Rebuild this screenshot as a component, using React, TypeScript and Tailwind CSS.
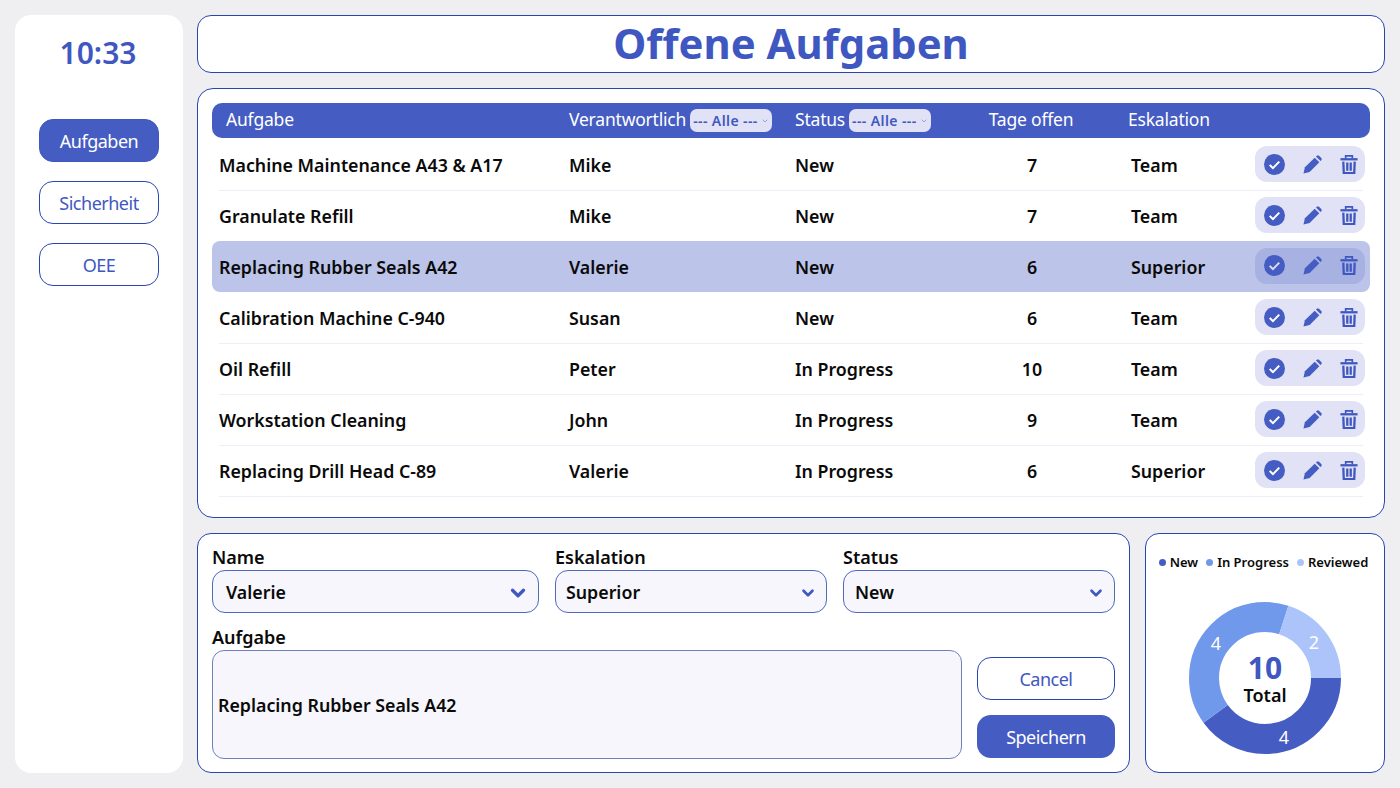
import { ChevronDown } from "lucide-react";

interface Task {
  title: string;
  owner: string;
  status: string;
  days: number;
  escalation: string;
  selected?: boolean;
  noDivider?: boolean;
}

const tasks: Task[] = [
  { title: "Machine Maintenance A43 & A17", owner: "Mike", status: "New", days: 7, escalation: "Team" },
  { title: "Granulate Refill", owner: "Mike", status: "New", days: 7, escalation: "Team", noDivider: true },
  { title: "Replacing Rubber Seals A42", owner: "Valerie", status: "New", days: 6, escalation: "Superior", selected: true, noDivider: true },
  { title: "Calibration Machine C-940", owner: "Susan", status: "New", days: 6, escalation: "Team" },
  { title: "Oil Refill", owner: "Peter", status: "In Progress", days: 10, escalation: "Team" },
  { title: "Workstation Cleaning", owner: "John", status: "In Progress", days: 9, escalation: "Team" },
  { title: "Replacing Drill Head C-89", owner: "Valerie", status: "In Progress", days: 6, escalation: "Superior" },
];

const columns = "grid-cols-[350px_226px_138px_198px_1fr]";
const buttonLabel = "pt-[2px] text-[18px] tracking-[-0.5px]";

function HeaderFilter() {
  return (
    <span className="flex h-[23px] w-[82px] items-center justify-between rounded-[7px] bg-[#e1e2f5] pl-[3px] pr-[3px] text-[14px] font-semibold tracking-[0.4px] text-[#3f57c0]">
      --- Alle ---
      <ChevronDown className="h-[8px] w-[8px] text-[#6f7fd0]" strokeWidth={2} />
    </span>
  );
}

function ActionIcons({ selected }: { selected?: boolean }) {
  return (
    <div
      className={`flex h-[36px] w-[110px] items-center rounded-[12px] pl-[9px] ${
        selected ? "-mt-[4px] bg-[#a7b2e2]" : "-mt-[2px] bg-[#e1e2f5]"
      }`}
    >
      <svg viewBox="0 0 22 22" className="h-[21px] w-[21px]">
        <circle cx="11" cy="11" r="11" fill="#455cc2" />
        <path d="M6 11.4l3.4 3.4L16 8" fill="none" stroke={selected ? "#d5daf2" : "#ffffff"} strokeWidth="2.2" />
      </svg>
      <svg viewBox="0 0 20 20" className="ml-[18px] h-[19px] w-[19px]" fill="#455cc2">
        <path d="M0.5 19.5L2 12.8L12.3 2.8L17.2 7.7L7 18Z" />
        <path d="M13.6 1.6L14.6 0.7Q15.7 -0.2 16.8 0.7L19.3 3.2Q20.2 4.3 19.3 5.4L18.4 6.4Z" />
      </svg>
      <svg viewBox="0 0 18 20" className="ml-[18px] h-[19px] w-[18px]" fill="none" stroke="#3f57c0" strokeWidth="2.4">
        <path d="M5.5 3.5V1h7v2.5" strokeWidth="1.8" />
        <path d="M0 4.5h18" />
        <path d="M3 7l.5 12h11L15 7" />
        <path d="M7.2 8v8.5M10.8 8v8.5" />
      </svg>
    </div>
  );
}

function TaskRow({ task }: { task: Task }) {
  const rowLayout = task.selected ? "h-[51px] pt-[2px] mb-px rounded-[8px] bg-[#bcc4e9]" : "h-[50px]";
  return (
    <div className={`grid ${rowLayout} ${columns} items-center pl-[7px] text-[17.8px] font-semibold text-[#0a0a0a]`}>
      <span>{task.title}</span>
      <span>{task.owner}</span>
      <span>{task.status}</span>
      <span className="text-center">{task.days}</span>
      <div className="flex items-center justify-between pr-[5px]">
        <span>{task.escalation}</span>
        <ActionIcons selected={task.selected} />
      </div>
    </div>
  );
}

function FormSelect({ label, value, width, pad, chevron }: { label: string; value: string; width: string; pad: string; chevron: string }) {
  return (
    <div className={width}>
      <div className="text-[18px] font-semibold leading-[25px] text-[#0a0a0a]">{label}</div>
      <div className={`flex h-[43px] items-center justify-between rounded-[13px] border border-[#5268bb] bg-[#f6f6fc] pt-[2px] pr-[9px] text-[17.8px] font-semibold text-[#0a0a0a] ${pad}`}>
        {value}
        <ChevronDown className={`${chevron} text-[#3f57c0]`} strokeWidth={3.5} />
      </div>
    </div>
  );
}

function Donut() {
  return (
    <div className="relative mx-auto h-[152px] w-[152px]">
      <svg viewBox="0 0 152 152" className="h-[152px] w-[152px]">
        <circle cx="76" cy="76" r="61" fill="none" stroke="#455cc2" strokeWidth="30" pathLength={10} strokeDasharray="4 6" />
        <circle cx="76" cy="76" r="61" fill="none" stroke="#7098eb" strokeWidth="30" pathLength={10} strokeDasharray="4 6" strokeDashoffset={-4} />
        <circle cx="76" cy="76" r="61" fill="none" stroke="#adc4fb" strokeWidth="30" pathLength={10} strokeDasharray="2 8" strokeDashoffset={-8} />
        <text x="95" y="142" fill="#ffffff" fontSize="18" textAnchor="middle">4</text>
        <text x="27" y="48" fill="#ffffff" fontSize="18" textAnchor="middle">4</text>
        <text x="125" y="47" fill="#ffffff" fontSize="18" textAnchor="middle">2</text>
      </svg>
      <div className="absolute inset-0 flex flex-col items-center justify-center pt-[2px]">
        <span className="text-[30px] font-bold leading-[32px] text-[#3f57c0]">10</span>
        <span className="text-[18px] font-semibold leading-[22px] text-[#0a0a0a]">Total</span>
      </div>
    </div>
  );
}

export default function App() {
  return (
    <div className="flex h-[788px] w-[1400px] gap-[14px] overflow-hidden bg-[#efeef1] p-[15px] font-['Noto_Sans',sans-serif]">
      <aside className="flex h-[758px] w-[168px] flex-col items-center rounded-[16px] bg-white pt-[17px]">
        <div className="pr-[2px] text-[30px] font-semibold leading-[42px] text-[#3f57c0]">10:33</div>
        <nav className="mt-[45px] flex flex-col gap-[19px]">
          <button className={`h-[43px] w-[120px] rounded-[14px] border border-[#3f57c0] bg-[#455cc2] text-white ${buttonLabel}`}>Aufgaben</button>
          <button className={`h-[43px] w-[120px] rounded-[14px] border border-[#2b44b4] bg-white text-[#3f57c0] ${buttonLabel}`}>Sicherheit</button>
          <button className={`h-[43px] w-[120px] rounded-[14px] border border-[#2b44b4] bg-white text-[#3f57c0] ${buttonLabel}`}>OEE</button>
        </nav>
      </aside>

      <main className="flex w-[1188px] flex-col gap-[15px]">
        <header className="flex h-[58px] items-center justify-center rounded-[14px] border border-[#2b44b4] bg-white pb-[1px] text-[41.8px] font-bold text-[#3f57c0]">
          Offene Aufgaben
        </header>

        <section className="h-[430px] rounded-[16px] border border-[#2b44b4] bg-white px-[14px] pt-[14px]">
          <div className={`grid h-[35px] ${columns} items-center rounded-[10px] bg-[#455cc2] pl-[14px] text-[17.5px] tracking-[-0.2px] text-white`}>
            <span className="-mt-[2px]">Aufgabe</span>
            <span className="-ml-[7px] flex items-center gap-[4px]"><span className="-mt-[2px]">Verantwortlich</span> <HeaderFilter /></span>
            <span className="-ml-[7px] flex items-center gap-[4px]"><span className="-mt-[2px]">Status</span> <HeaderFilter /></span>
            <span className="-mt-[2px] -ml-[16px] text-center">Tage offen</span>
            <span className="-mt-[2px] -ml-[10px]">Eskalation</span>
          </div>
          <div className="mt-[2px]">
            {tasks.map((task) => (
              <div key={task.title}>
                <TaskRow task={task} />
                {!task.noDivider && <div className="mx-[7px] h-px bg-[#eeeef8]" />}
              </div>
            ))}
          </div>
        </section>

        <div className="flex gap-[15px]">
          <section className="h-[240px] w-[933px] rounded-[14px] border border-[#2b44b4] bg-white px-[14px] pt-[11px]">
            <div className="flex gap-[16px]">
              <FormSelect label="Name" value="Valerie" width="w-[327px]" pad="pl-[13px]" chevron="h-[22px] w-[22px]" />
              <FormSelect label="Eskalation" value="Superior" width="w-[272px]" pad="pl-[10px]" chevron="h-[18px] w-[18px]" />
              <FormSelect label="Status" value="New" width="w-[272px]" pad="pl-[11px]" chevron="h-[18px] w-[18px]" />
            </div>
            <div className="mt-[12px] flex gap-[15px]">
              <div className="w-[750px]">
                <div className="text-[18px] font-semibold leading-[25px] text-[#0a0a0a]">Aufgabe</div>
                <div className="flex h-[109px] items-center rounded-[12px] border border-[#7080bb] bg-[#f6f6fc] pl-[5px] pt-[2px] text-[17.8px] font-semibold text-[#0a0a0a]">
                  Replacing Rubber Seals A42
                </div>
              </div>
              <div className="flex w-[138px] flex-col gap-[15px] pt-[32px]">
                <button className={`h-[43px] rounded-[14px] border border-[#2b44b4] bg-white text-[#3f57c0] ${buttonLabel}`}>Cancel</button>
                <button className={`h-[43px] rounded-[14px] bg-[#455cc2] text-white ${buttonLabel}`}>Speichern</button>
              </div>
            </div>
          </section>

          <section className="h-[240px] w-[240px] rounded-[14px] border border-[#2b44b4] bg-white pt-[19px]">
            <div className="flex items-center justify-center gap-[8px] pr-[3px] text-[13px] font-semibold text-[#0a0a0a]">
              <span className="flex items-center gap-[4px]"><span className="h-[7px] w-[7px] rounded-full bg-[#455cc2]" />New</span>
              <span className="flex items-center gap-[4px]"><span className="h-[7px] w-[7px] rounded-full bg-[#7098eb]" />In Progress</span>
              <span className="flex items-center gap-[4px]"><span className="h-[7px] w-[7px] rounded-full bg-[#adc4fb]" />Reviewed</span>
            </div>
            <div className="mt-[29px]">
              <Donut />
            </div>
          </section>
        </div>
      </main>
    </div>
  );
}
